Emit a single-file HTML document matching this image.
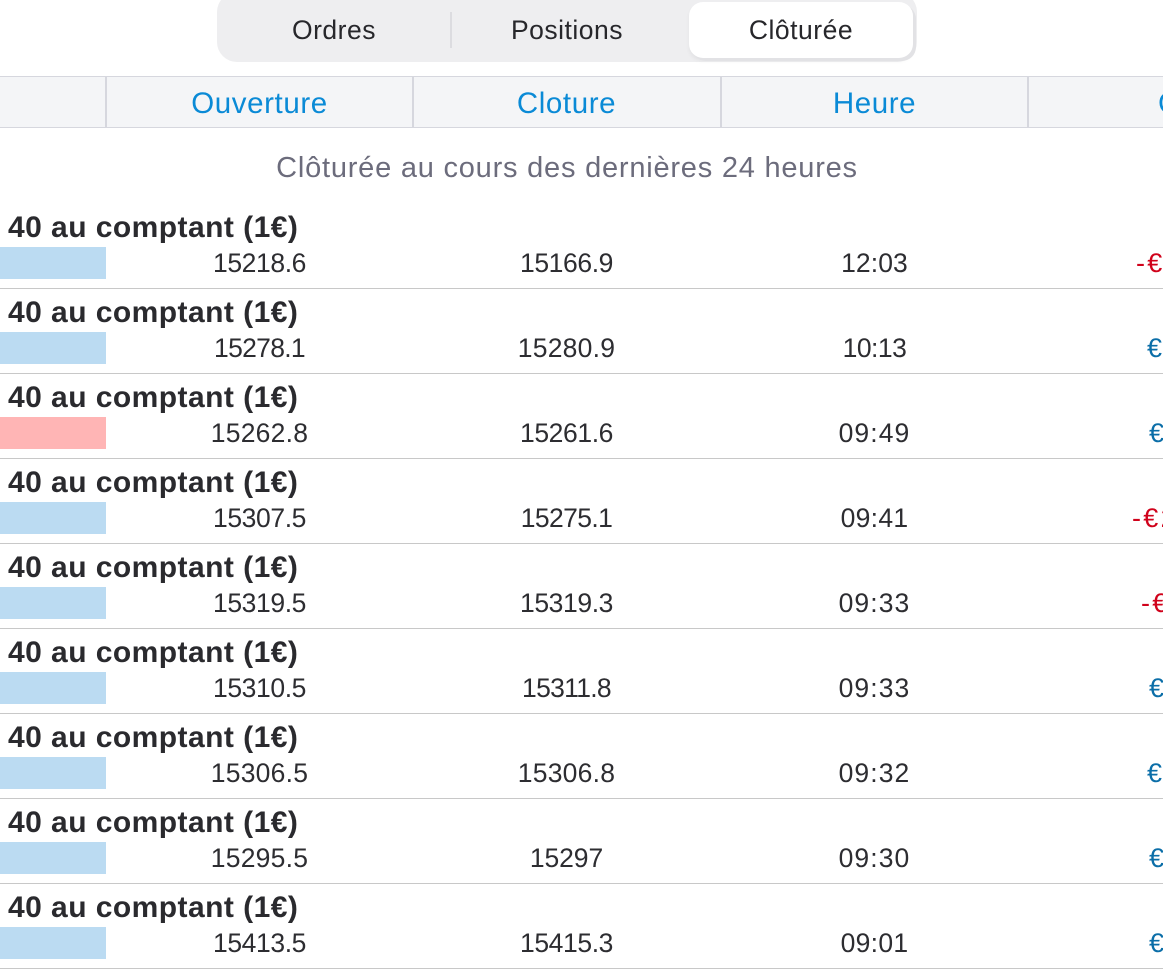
<!DOCTYPE html>
<html lang="fr">
<head>
<meta charset="utf-8">
<title>Clôturée</title>
<style>
html,body{margin:0;padding:0;background:#fff;}
body{width:1163px;height:974px;overflow:hidden;position:relative;font-family:"Liberation Sans",sans-serif;}
div{position:absolute;white-space:nowrap;}
.seg{left:217px;top:-8px;width:700px;height:70px;background:#eeeef0;border-radius:20px;}
.sel{left:689px;top:2px;width:224px;height:56px;background:#fff;border-radius:14px;box-shadow:3px 3px 0 #e2e2e5,0 3px 4px rgba(0,0,0,.05);}
.segd{left:450px;top:12px;width:2px;height:36px;background:#dcdce0;}
.st{top:15px;width:224px;height:30px;line-height:30px;text-align:center;font-size:26.5px;letter-spacing:.5px;color:#27272b;}
.hdr{left:0;top:76px;width:1163px;height:50px;background:#f4f5f7;border-top:1px solid #d6d7de;border-bottom:1px solid #d6d7de;}
.hd{top:90px;width:307px;height:28px;line-height:28px;text-align:center;font-size:29.5px;letter-spacing:.6px;color:#0a8ad6;}
.hv{top:77px;width:2px;height:50px;background:#d6d7de;}
.sub{left:0;top:152px;width:1134px;height:32px;line-height:32px;text-align:center;font-size:29px;letter-spacing:.78px;color:#6c6c7c;}
.t{left:8px;height:32px;line-height:32px;font-size:30px;font-weight:bold;letter-spacing:.45px;color:#2a2a2e;margin-top:1px;}
.b{left:0;width:106px;height:32px;}
.v{width:307px;height:30px;line-height:30px;text-align:center;font-size:26.5px;letter-spacing:-.4px;color:#2d2d31;}
.w{letter-spacing:.25px;}
.c{letter-spacing:1.1px;}
.a{right:0;height:30px;line-height:30px;font-size:27px;letter-spacing:2.3px;overflow:hidden;}
.r{color:#d0021b;}
.g{color:#0b6ea8;}
.l{left:0;width:1163px;height:1px;background:#c8c8c8;}
</style>
</head>
<body>
<div class="seg"></div>
<div class="segd"></div>
<div class="sel"></div>
<div class="st" style="left:222px">Ordres</div>
<div class="st" style="left:455px">Positions</div>
<div class="st" style="left:689px">Clôturée</div>

<div class="hdr"></div>
<div class="hv" style="left:105px"></div>
<div class="hv" style="left:412px"></div>
<div class="hv" style="left:720px"></div>
<div class="hv" style="left:1027px"></div>
<div class="hd" style="left:106px">Ouverture</div>
<div class="hd" style="left:413px">Cloture</div>
<div class="hd" style="left:721px">Heure</div>
<div class="hd" style="left:1158px;width:5px;overflow:hidden;text-align:left">Gain</div>

<div class="sub">Clôturée au cours des dernières 24 heures</div>

<div class="t" style="top:211px">40 au comptant (1€)</div>
<div class="b" style="top:247px;background:#bbdbf2"></div>
<div class="v" style="top:248px;left:106px">15218.6</div>
<div class="v" style="top:248px;left:413px">15166.9</div>
<div class="v" style="top:248px;left:721px;letter-spacing:.1px">12:03</div>
<div class="a r" style="top:248px;left:1136px">-€1.29</div>
<div class="l" style="top:288px"></div>

<div class="t" style="top:296px">40 au comptant (1€)</div>
<div class="b" style="top:332px;background:#bbdbf2"></div>
<div class="v" style="top:333px;left:106px;letter-spacing:-.7px">15278.1</div>
<div class="v w" style="top:333px;left:413px">15280.9</div>
<div class="v" style="top:333px;left:721px;letter-spacing:-.5px">10:13</div>
<div class="a g" style="top:333px;left:1147px">€2.41</div>
<div class="l" style="top:373px"></div>

<div class="t" style="top:381px">40 au comptant (1€)</div>
<div class="b" style="top:417px;background:#ffb5b5"></div>
<div class="v w" style="top:418px;left:106px">15262.8</div>
<div class="v" style="top:418px;left:413px">15261.6</div>
<div class="v c" style="top:418px;left:721px">09:49</div>
<div class="a g" style="top:418px;left:1149px">€1.03</div>
<div class="l" style="top:458px"></div>

<div class="t" style="top:466px">40 au comptant (1€)</div>
<div class="b" style="top:502px;background:#bbdbf2"></div>
<div class="v" style="top:503px;left:106px">15307.5</div>
<div class="v" style="top:503px;left:413px;letter-spacing:-.6px">15275.1</div>
<div class="v" style="top:503px;left:721px;letter-spacing:.3px">09:41</div>
<div class="a r" style="top:503px;left:1132px">-€27.84</div>
<div class="l" style="top:543px"></div>

<div class="t" style="top:551px">40 au comptant (1€)</div>
<div class="b" style="top:587px;background:#bbdbf2"></div>
<div class="v" style="top:588px;left:106px">15319.5</div>
<div class="v" style="top:588px;left:413px">15319.3</div>
<div class="v c" style="top:588px;left:721px">09:33</div>
<div class="a r" style="top:588px;left:1141px">-€0.17</div>
<div class="l" style="top:628px"></div>

<div class="t" style="top:636px">40 au comptant (1€)</div>
<div class="b" style="top:672px;background:#bbdbf2"></div>
<div class="v" style="top:673px;left:106px">15310.5</div>
<div class="v" style="top:673px;left:413px;letter-spacing:-.7px">15311.8</div>
<div class="v c" style="top:673px;left:721px">09:33</div>
<div class="a g" style="top:673px;left:1149px">€1.12</div>
<div class="l" style="top:713px"></div>

<div class="t" style="top:721px">40 au comptant (1€)</div>
<div class="b" style="top:757px;background:#bbdbf2"></div>
<div class="v w" style="top:758px;left:106px">15306.5</div>
<div class="v w" style="top:758px;left:413px">15306.8</div>
<div class="v c" style="top:758px;left:721px">09:32</div>
<div class="a g" style="top:758px;left:1147px">€0.26</div>
<div class="l" style="top:798px"></div>

<div class="t" style="top:806px">40 au comptant (1€)</div>
<div class="b" style="top:842px;background:#bbdbf2"></div>
<div class="v w" style="top:843px;left:106px">15295.5</div>
<div class="v" style="top:843px;left:413px;letter-spacing:-.1px">15297</div>
<div class="v c" style="top:843px;left:721px">09:30</div>
<div class="a g" style="top:843px;left:1149px">€1.29</div>
<div class="l" style="top:883px"></div>

<div class="t" style="top:891px">40 au comptant (1€)</div>
<div class="b" style="top:927px;background:#bbdbf2"></div>
<div class="v" style="top:928px;left:106px">15413.5</div>
<div class="v" style="top:928px;left:413px">15415.3</div>
<div class="v" style="top:928px;left:721px;letter-spacing:.3px">09:01</div>
<div class="a g" style="top:928px;left:1149px">€1.55</div>
<div class="l" style="top:968px"></div>
</body>
</html>
